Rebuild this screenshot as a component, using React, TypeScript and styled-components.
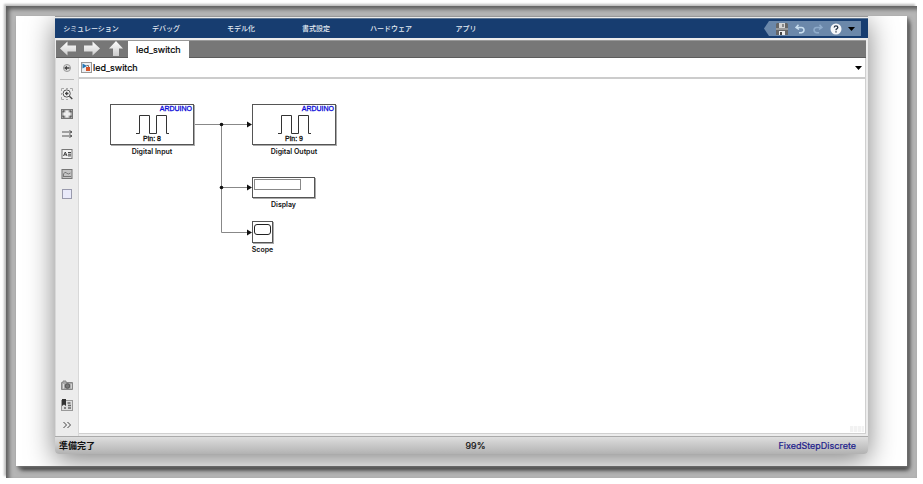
import React from "react";
import styled, { createGlobalStyle } from "styled-components";

const GlobalStyle = createGlobalStyle`
  *, *::before, *::after { box-sizing: border-box; }
  body {
    margin: 0;
    background: #fff;
    color: #111;
    font-family: Inter, "Noto Sans CJK JP", sans-serif;
    font-size: 9px;
  }
  button {
    margin: 0;
    padding: 0;
    border: 0;
    background: none;
    color: inherit;
    font: inherit;
    cursor: pointer;
  }
  svg { display: block; }
`;

const Page = styled.div`
  display: flex;
  min-height: 100vh;
  padding: 6px;
`;

const Frame = styled.div`
  flex: 1;
  display: flex;
  min-width: 0;
  padding: 10px 10px 12px;
  background: #b5b5b5;
  box-shadow:
    -2px -2px 2px rgba(0, 0, 0, 0.25),
    inset 3px 3px 4px rgba(0, 0, 0, 0.5),
    inset -2px -2px 1px #b5b5b5;
`;

const Shade = styled.div`
  flex: 1;
  display: flex;
  min-width: 0;
  box-shadow:
    2px 2px 3px #777,
    3px 4px 4px -2px #111,
    3px 5px 5px -1px #555;
`;

const Paper = styled.div`
  flex: 1;
  display: flex;
  min-width: 0;
  overflow: hidden;
  padding: 0 39px 12px;
  background: #fff;
`;

const Window = styled.section`
  flex: 1;
  display: flex;
  flex-direction: column;
  min-width: 0;
  border-radius: 0 0 4px 4px;
  background: #ececec;
  box-shadow: 0 6px 28px rgba(0, 0, 0, 0.5);
  border-top: 1px solid #999;
`;

const MenuBar = styled.header`
  display: flex;
  align-items: center;
  justify-content: space-between;
  height: 20px;
  margin-top: 1px;
  padding-right: 7px;
  background: #173d70;
  border-top: 1px solid #5b7493;
`;

const Menus = styled.nav`
  display: flex;
`;

const MenuButton = styled.button`
  width: 75px;
  padding-right: 3px;
  color: #e4ebf3;
  font-size: 7px;
  font-weight: 500;
  line-height: 18px;
  text-align: center;
  white-space: nowrap;
`;

const QuickBar = styled.div`
  display: grid;
  grid-template-columns: 18px 18px 18px 18px 12px;
  align-items: center;
  justify-items: center;
  height: 15px;
  padding: 0 4px 0 9px;
  background: #6b88aa;
  clip-path: polygon(0 50%, 5px 0, 100% 0, 100% 100%, 5px 100%);
`;

const TabBar = styled.div`
  display: flex;
  height: 18px;
  margin: 2px 2px 0 1px;
  background: #777;
  border-top: 1px solid #999;
  border-bottom: 1px solid #5c5c5c;
`;

const Arrows = styled.div`
  display: grid;
  grid-template-columns: 24px 24px 24px;
  align-items: center;
  justify-items: center;
`;

const Tab = styled.button`
  height: 17px;
  padding: 0 8px;
  background: #fff;
  color: #000;
  font-size: 9px;
  line-height: 16px;
  -webkit-text-stroke: 0.2px #000;
`;

const Body = styled.div`
  flex: 1;
  display: flex;
  min-height: 0;
`;

const SideBar = styled.aside`
  display: flex;
  flex-direction: column;
  align-items: center;
  width: 24px;
  padding-bottom: 1px;
  border-left: 1px solid #d8d8d8;
  border-right: 1px solid #d8d8d8;
`;

const ToolButton = styled.button`
  display: grid;
  place-items: center;
  width: 20px;
  height: 20px;
`;

const Divider = styled.hr`
  width: 14px;
  margin: 1px 0 4px;
  border: 0;
  border-top: 1px solid #bbb;
`;

const Spacer = styled.div`
  flex: 1;
`;

const Main = styled.main`
  flex: 1;
  display: flex;
  flex-direction: column;
  min-width: 0;
  margin: 0 2px 2px 0;
  background: #fff;
  border-right: 1px solid #d0d0d0;
  border-bottom: 1px solid #d0d0d0;
`;

const PathBar = styled.div`
  display: flex;
  align-items: center;
  justify-content: space-between;
  height: 21px;
  padding: 0 3px 0 2px;
  border-bottom: 2px solid #ccc;
`;

const PathName = styled.button`
  display: flex;
  align-items: center;
  gap: 1px;
  color: #000;
  font-size: 9px;
  -webkit-text-stroke: 0.2px #000;
`;

const Canvas = styled.div`
  position: relative;
  flex: 1;
  min-height: 200px;
`;

const Wires = styled.svg`
  position: absolute;
  left: 0;
  top: 0;
`;

const Node = styled.figure<{ $x: number; $y: number; $w: number }>`
  position: absolute;
  left: ${(p) => p.$x}px;
  top: ${(p) => p.$y}px;
  display: flex;
  flex-direction: column;
  align-items: center;
  width: ${(p) => p.$w}px;
  margin: 0;
`;

const Block = styled.div<{ $h: number }>`
  display: flex;
  flex-direction: column;
  align-items: center;
  width: 100%;
  height: ${(p) => p.$h}px;
  background: #fff;
  border: 1px solid #555;
  box-shadow: 1px 1px 0 #aaa;
`;

const NodeLabel = styled.figcaption`
  margin-top: 2px;
  font-size: 7px;
  font-weight: 600;
  line-height: 9px;
  white-space: nowrap;
`;

const Vendor = styled.span`
  align-self: flex-end;
  padding-right: 1px;
  color: #0a0ad8;
  font-family: "Liberation Sans", sans-serif;
  font-size: 7px;
  line-height: 8px;
  -webkit-text-stroke: 0.3px #0a0ad8;
`;

const Pin = styled.span`
  font-family: "Liberation Sans", sans-serif;
  font-size: 7px;
  line-height: 8px;
  -webkit-text-stroke: 0.3px #111;
`;

const Readout = styled.div`
  align-self: flex-start;
  width: 47px;
  height: 11px;
  margin: 1px;
  border: 1px solid #888;
`;

const Screen = styled.div`
  width: 17px;
  height: 11px;
  margin-top: 2px;
  border: 1px solid #222;
  border-radius: 3px;
`;

const ResizeGrip = styled.div`
  position: absolute;
  right: 1px;
  bottom: 1px;
  width: 14px;
  height: 6px;
  background: repeating-linear-gradient(90deg, #f2f2f2 0 3px, #fafafa 3px 4px);
`;

const StatusBar = styled.footer`
  display: grid;
  grid-template-columns: 1fr auto 1fr;
  align-items: center;
  height: 18px;
  padding: 0 12px 1px 4px;
  border-top: 1px solid #aaa;
  border-radius: 0 0 4px 4px;
  background: linear-gradient(#dedede, #b2b2b2);
  font-size: 9px;
`;

const Ready = styled.span`
  font-weight: 600;
`;

const Zoom = styled.span`
  padding-left: 36px;
  -webkit-text-stroke: 0.2px #111;
`;

const Solver = styled.a`
  justify-self: end;
  color: #20208c;
  text-decoration: none;
  -webkit-text-stroke: 0.2px #20208c;
`;

const menus = ["シミュレーション", "デバッグ", "モデル化", "書式設定", "ハードウェア", "アプリ"];

const NavArrow = ({ up = false, right = false }: { up?: boolean; right?: boolean }) => (
  <svg width="16" height="16" viewBox="0 0 16 16" aria-hidden="true">
    <defs>
      <linearGradient id="metal" x1="0" y1="0" x2="0" y2="1">
        <stop offset="0" stopColor="#fff" />
        <stop offset="1" stopColor="#ccc" />
      </linearGradient>
    </defs>
    <path
      fill="url(#metal)"
      d={
        up
          ? "M8 0 15 7.5H11V15H5V7.5H1Z"
          : right
            ? "M0 4.5H8.5V.5L16 7.5 8.5 14.5V10.5H0Z"
            : "M16 4.5H7.5V.5L0 7.5 7.5 14.5V10.5H16Z"
      }
    />
  </svg>
);

const SaveIcon = () => (
  <svg width="12" height="12" viewBox="0 0 12 12" aria-hidden="true">
    <path d="M1 0H11L12 1V12H0V1Z" fill="#666" />
    <path d="M3 0H9V5H3Z" fill="#d5d5d5" />
    <path d="M6 1H8V4H6Z" fill="#888" />
    <path d="M0 5H12V7H0Z" fill="#999" />
    <path d="M3 8H9V12H3Z" fill="#eee" />
    <path d="M4 9H6V12H4Z" fill="#444" />
  </svg>
);

const UndoIcon = ({ redo = false }: { redo?: boolean }) => (
  <svg width="10" height="10" viewBox="0 0 10 10" aria-hidden="true">
    <g
      transform={redo ? "matrix(-1 0 0 1 10 0)" : undefined}
      fill="none"
      stroke={redo ? "#8faccb" : "#c8deef"}
      strokeWidth="1.5"
    >
      <path d="M3.5 .8 1 3.5 4 5.5M1.5 3.5H6.5Q9 3.7 9 6T6.5 8.7H4" />
    </g>
  </svg>
);

const HelpIcon = () => (
  <svg width="12" height="12" viewBox="0 0 12 12" aria-hidden="true">
    <circle cx="6" cy="6" r="5.5" fill="#f5f7fa" />
    <path
      d="M4.2 4.5Q4.3 2.8 6 2.8T7.8 4.4Q7.8 5.2 6.7 5.9 6 6.3 6 7.2M6 8.2V9.5"
      fill="none"
      stroke="#253448"
      strokeWidth="1.3"
    />
  </svg>
);

const Caret = () => (
  <svg width="7" height="4" viewBox="0 0 7 4" aria-hidden="true">
    <path d="M0 0H7L3.5 4Z" fill="#000" />
  </svg>
);

const ModelIcon = () => (
  <svg width="11" height="11" viewBox="0 0 11 11" aria-hidden="true">
    <rect x=".5" y=".5" width="10" height="10" fill="#eceff3" stroke="#999" />
    <path d="M1.5 1.5 6 4 1.5 6.5Z" fill="#2376b5" />
    <path d="M5.5 3.5H7.5V5" fill="none" stroke="#777" />
    <rect x="5" y="5" width="4" height="4" fill="#d6542a" />
  </svg>
);

const toolDrawings: Record<string, React.ReactNode> = {
  back: (
    <>
      <circle cx="6" cy="6" r="3.5" fill="#ddd" stroke="#999" />
      <path d="M3 6 6 3.7V5.2H8.5V6.8H6V8.3Z" fill="#444" />
    </>
  ),
  zoom: (
    <>
      <path d="M.5 3V.5H3M5 .5H7M9 .5H11.5V3M.5 5V7M.5 9V11.5H3M5 11.5H7" stroke="#aaa" />
      <circle cx="5.7" cy="5.5" r="3.6" fill="#f6f6f6" stroke="#555" />
      <path d="M4 5.5H7.5M5.7 3.8V7.2M8.4 8.2 11.3 11" stroke="#444" strokeWidth="1.3" />
    </>
  ),
  fit: (
    <>
      <rect x=".5" y="1.5" width="11" height="9" fill="#aaa" stroke="#777" />
      <path d="M4.5 2.5H7.5V4.5H9.5V7.5H7.5V9.5H4.5V7.5H2.5V4.5H4.5Z" fill="#eee" />
      <path d="M2 4.5V3H3.5M8.5 3H10V4.5M10 7.5V9H8.5M3.5 9H2V7.5" stroke="#444" />
    </>
  ),
  signals: (
    <path d="M1 4H11M8.5 2.5 11 4 8.5 5.5M1 8H11M8.5 6.5 11 8 8.5 9.5" stroke="#555" />
  ),
  note: (
    <>
      <rect x="1" y="1.5" width="10" height="9" fill="#f3f3f3" stroke="#777" />
      <path d="M2.5 8 4.3 4 6 8M3.2 6.8H5.4M7 4.5H10M7 6.2H10M7 7.9H10" stroke="#444" />
    </>
  ),
  image: (
    <>
      <rect x="1" y="1.5" width="10" height="9" fill="#c4c4c4" stroke="#777" />
      <path d="M2.5 8V6Q4 3 5.5 5T9.5 5M2 8.5H10" stroke="#777" />
    </>
  ),
  area: <rect x="1.5" y="1.5" width="9" height="9" fill="#e9eafa" stroke="#999aad" />,
  camera: (
    <>
      <path d="M.5 3.5H2V2H5V3.5H11.5V10.5H.5Z" fill="#aaa" stroke="#888" />
      <circle cx="6.5" cy="7" r="2.3" fill="#777" stroke="#555" />
      <path d="M2.5 5V9.5M10.3 5V9.5" stroke="#ddd" />
    </>
  ),
  library: (
    <>
      <rect x=".5" y="1.5" width="11" height="10" fill="#ddd" stroke="#999" />
      <path d="M1 0H5V7L3 5.5 1 7Z" fill="#333" />
      <path d="M6.5 4H9.5M3 9H5M7 9H10M7 6.5H10" stroke="#666" strokeWidth="1.5" />
    </>
  ),
  more: <path d="M2.5 3 5.5 6 2.5 9M6.5 3 9.5 6 6.5 9" stroke="#444" />,
};

const Tool = ({ name, label }: { name: string; label: string }) => (
  <ToolButton aria-label={label}>
    <svg width="12" height="12" viewBox="0 0 12 12" fill="none" aria-hidden="true">
      {toolDrawings[name]}
    </svg>
  </ToolButton>
);

const PulseBlock = ({ x, pin, label }: { x: number; pin: number; label: string }) => (
  <Node $x={x} $y={25} $w={84}>
    <Block $h={41}>
      <Vendor>ARDUINO</Vendor>
      <svg width="34" height="22" viewBox="0 0 34 22" aria-hidden="true">
        <path d="M1 20.5H4.5V2.5H14.5V20.5H21.5V2.5H31.5V20.5H34" fill="none" stroke="#333" />
      </svg>
      <Pin>Pin: {pin}</Pin>
    </Block>
    <NodeLabel>{label}</NodeLabel>
  </Node>
);

export default function App() {
  return (
    <>
      <GlobalStyle />
      <Page>
        <Frame>
          <Shade>
            <Paper>
              <Window>
                <MenuBar>
                  <Menus>
                    {menus.map((m) => (
                      <MenuButton key={m}>{m}</MenuButton>
                    ))}
                  </Menus>
                  <QuickBar>
                    <button aria-label="保存"><SaveIcon /></button>
                    <button aria-label="元に戻す"><UndoIcon /></button>
                    <button aria-label="やり直し"><UndoIcon redo /></button>
                    <button aria-label="ヘルプ"><HelpIcon /></button>
                    <button aria-label="その他"><Caret /></button>
                  </QuickBar>
                </MenuBar>
                <TabBar>
                  <Arrows>
                    <button aria-label="戻る"><NavArrow /></button>
                    <button aria-label="進む"><NavArrow right /></button>
                    <button aria-label="上へ"><NavArrow up /></button>
                  </Arrows>
                  <Tab>led_switch</Tab>
                </TabBar>
                <Body>
                  <SideBar>
                    <Tool name="back" label="ブラウザーを隠す" />
                    <Divider />
                    <Tool name="zoom" label="ズーム" />
                    <Tool name="fit" label="全体を表示" />
                    <Tool name="signals" label="信号" />
                    <Tool name="note" label="注釈" />
                    <Tool name="image" label="イメージ" />
                    <Tool name="area" label="領域" />
                    <Spacer />
                    <Tool name="camera" label="スクリーンショット" />
                    <Tool name="library" label="ライブラリ" />
                    <Tool name="more" label="さらに表示" />
                  </SideBar>
                  <Main>
                    <PathBar>
                      <PathName><ModelIcon />led_switch</PathName>
                      <button aria-label="パス"><Caret /></button>
                    </PathBar>
                    <Canvas>
                      <Wires width="200" height="170" viewBox="0 0 200 170" aria-hidden="true">
                        <path
                          d="M115 45.5H170M142.5 45.5V153.5H170M142.5 108.5H170"
                          fill="none"
                          stroke="#888"
                        />
                        <path
                          d="M168 42.5 173 45.5 168 48.5ZM168 105.5 173 108.5 168 111.5ZM168 150.5 173 153.5 168 156.5Z"
                          fill="#111"
                        />
                        <circle cx="142.5" cy="45.5" r="1.8" fill="#111" />
                        <circle cx="142.5" cy="108.5" r="1.8" fill="#111" />
                      </Wires>
                      <PulseBlock x={31} pin={8} label="Digital Input" />
                      <PulseBlock x={173} pin={9} label="Digital Output" />
                      <Node $x={173} $y={98} $w={63}>
                        <Block $h={21}><Readout /></Block>
                        <NodeLabel>Display</NodeLabel>
                      </Node>
                      <Node $x={173} $y={142} $w={21}>
                        <Block $h={22}><Screen /></Block>
                        <NodeLabel>Scope</NodeLabel>
                      </Node>
                      <ResizeGrip />
                    </Canvas>
                  </Main>
                </Body>
                <StatusBar>
                  <Ready>準備完了</Ready>
                  <Zoom>99%</Zoom>
                  <Solver href="#solver">FixedStepDiscrete</Solver>
                </StatusBar>
              </Window>
            </Paper>
          </Shade>
        </Frame>
      </Page>
    </>
  );
}
